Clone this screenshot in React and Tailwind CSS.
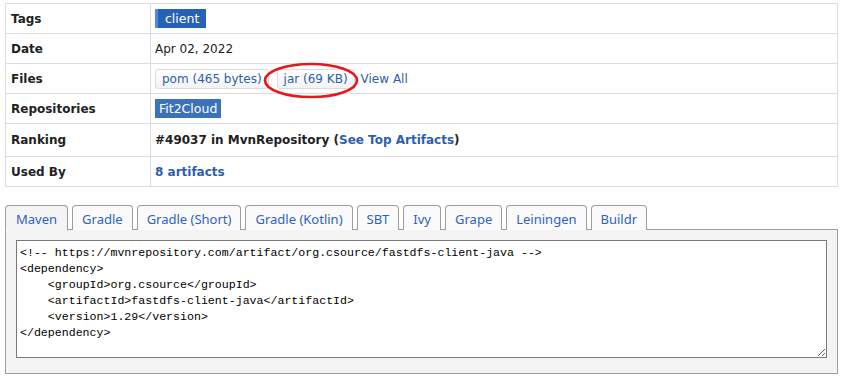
import { useState } from 'react'

const rows = [
  { label: 'Tags', h: 'h-[30px]', kind: 'tags' },
  { label: 'Date', h: 'h-[30px]', kind: 'date' },
  { label: 'Files', h: 'h-[30px]', kind: 'files' },
  { label: 'Repositories', h: 'h-[30px]', kind: 'repos' },
  { label: 'Ranking', h: 'h-[33px]', kind: 'ranking' },
  { label: 'Used By', h: 'h-[30px]', kind: 'usedby' },
]

const tabs = ['Maven', 'Gradle', 'Gradle (Short)', 'Gradle (Kotlin)', 'SBT', 'Ivy', 'Grape', 'Leiningen', 'Buildr']

const snippet = `<!-- https://mvnrepository.com/artifact/org.csource/fastdfs-client-java -->
<dependency>
    <groupId>org.csource</groupId>
    <artifactId>fastdfs-client-java</artifactId>
    <version>1.29</version>
</dependency>`

function Value({ kind }) {
  if (kind === 'tags')
    return (
      <span className="inline-block bg-[#2762b5] border-l-[3px] border-[#4d8ae0] text-white px-[7px] leading-[19px] text-[12.5px]">client</span>
    )
  if (kind === 'date') return <span>Apr 02, 2022</span>
  if (kind === 'files')
    return (
      <div className="relative flex items-center">
        <a className="inline-block border border-[#dcdcdc] rounded-[3px] bg-gradient-to-b from-white to-[#f3f3f3] text-[#2d5fae] px-[6px] leading-[18px]">pom (465 bytes)</a>
        <a className="ml-[8px] inline-block border border-[#dcdcdc] rounded-[3px] bg-gradient-to-b from-white to-[#f3f3f3] text-[#2d5fae] px-[6px] leading-[18px]">jar (69 KB)</a>
        <a className="ml-[6px] text-[#2d5fae]">View All</a>
        <svg className="absolute left-[108px] top-[-7px] pointer-events-none" width="96" height="37" viewBox="0 0 96 37">
          <ellipse cx="48" cy="18.5" rx="46" ry="16.5" fill="none" stroke="#e8161e" strokeWidth="2.6" />
        </svg>
      </div>
    )
  if (kind === 'repos')
    return <span className="inline-block bg-[#3c72b9] text-white px-[4px] leading-[19px] text-[12.5px]">Fit2Cloud</span>
  if (kind === 'ranking')
    return (
      <span className="font-bold">
        #49037 in MvnRepository (<a className="text-[#2d5fae]">See Top Artifacts</a>)
      </span>
    )
  return <a className="font-bold text-[#2d5fae]">8 artifacts</a>
}

export default function App() {
  const [active, setActive] = useState(0)
  const [comment, setComment] = useState(true)

  return (
    <div className="bg-white min-h-screen pl-[5px] pr-[9px] pt-[3px] text-[#222] font-['DejaVu_Sans',sans-serif] text-[12px]">
      {/* Artifact details */}
      <table className="w-[833px] border-collapse">
        <tbody>
          {rows.map((r) => (
            <tr key={r.label} className={r.h}>
              <th className="w-[145px] border border-[#dddddd] text-left font-bold pl-[5px] align-middle">{r.label}</th>
              <td className="border border-[#dddddd] pl-[4px] align-middle">
                <Value kind={r.kind} />
              </td>
            </tr>
          ))}
        </tbody>
      </table>

      {/* Build tool tabs */}
      <div className="mt-[18px] w-[833px]">
        <div className="flex gap-[4px] h-[25px] relative z-10 font-['Noto_Sans',sans-serif] text-[13px]">
          {tabs.map((t, i) => (
            <button
              key={t}
              onClick={() => setActive(i)}
              className={`border border-[#9d9d9d] rounded-t-[4px] px-[9px] text-[#2d62c4] leading-[22px] pt-[2px] ${
                i === active ? 'bg-[#f4f4f4] border-b-[#f4f4f4] h-[26px] px-[10px]' : 'bg-[#fafafa] border-b-0 h-[25px]'
              }`}
            >
              {t}
            </button>
          ))}
        </div>
        <div className="border border-[#9d9d9d] bg-[#f4f4f4] -mt-px pt-[10px] px-[10px] pb-[15px]">
          <textarea
            readOnly
            value={snippet}
            className="block w-full h-[118px] border border-[#7a7a7a] bg-white px-[3px] py-[4px] font-['Liberation_Mono',monospace] text-[11.6px] leading-[16px] text-black outline-none"
          />
        </div>
      </div>

      <label className="flex items-center gap-[7px] mt-[4px] pl-[4px] font-bold text-[12px]">
        <input type="checkbox" checked={comment} onChange={() => setComment(!comment)} className="w-[13px] h-[13px] accent-[#555]" />
        Include comment with link to declaration
      </label>
    </div>
  )
}
